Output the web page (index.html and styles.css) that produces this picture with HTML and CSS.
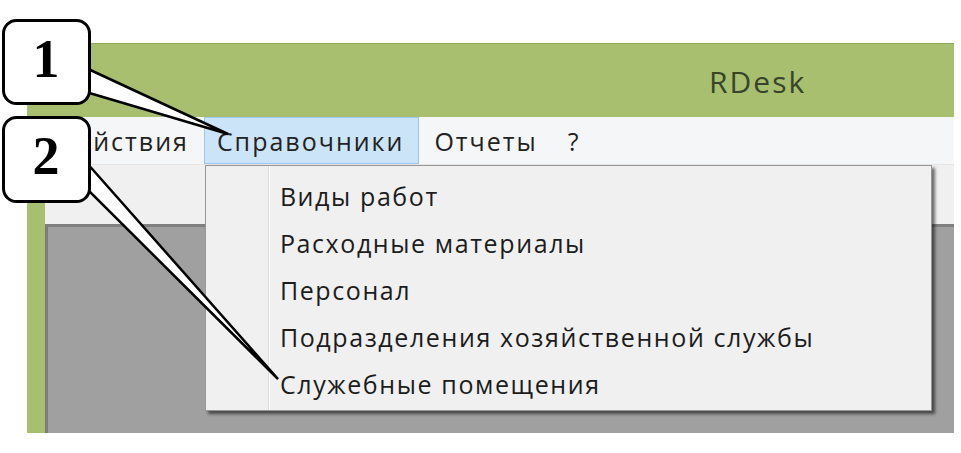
FILE: index.html
```html
<!DOCTYPE html>
<html lang="ru">
<head>
<meta charset="utf-8">
<title>RDesk</title>
<link rel="stylesheet" href="styles.css">
</head>
<body>
<div class="page">
  <div class="window">
    <div class="titlebar"><span class="title">RDesk</span></div>
    <div class="frame">
      <div class="client">
        <nav class="menubar">
          <div class="menu-item first">Действия</div>
          <div class="menu-item active">Справочники
            <div class="dropdown">
              <div class="dd-item">Виды работ</div>
              <div class="dd-item">Расходные материалы</div>
              <div class="dd-item">Персонал</div>
              <div class="dd-item">Подразделения хозяйственной службы</div>
              <div class="dd-item">Служебные помещения</div>
            </div>
          </div>
          <div class="menu-item">Отчеты</div>
          <div class="menu-item">?</div>
        </nav>
        <div class="toolbar"></div>
        <div class="mdi"></div>
      </div>
    </div>
  </div>
</div>
<svg class="callouts" width="961" height="453" viewBox="0 0 961 453">
  <polygon class="wedge" points="86,68 228,134 86,92"/>
  <polygon class="wedge" points="86,162 278,379 86,188"/>
  <rect class="cbox" x="3.5" y="20.5" width="86" height="83" rx="13"/>
  <rect class="cbox" x="3.5" y="117.5" width="86" height="84" rx="13"/>
  <text class="cnum" x="46" y="77">1</text>
  <text class="cnum" x="46" y="174">2</text>
</svg>
</body>
</html>
```

FILE: styles.css
```css
html, body {
  margin: 0;
  padding: 0;
  background: #ffffff;
}

body {
  width: 961px;
  height: 453px;
  overflow: hidden;
  position: relative;
  font-family: "Open Sans", "Noto Sans", sans-serif;
}

.page {
  padding: 43px 7px 0 27px;
}

.window {
  background: #a7bf6f;
  border-top: 1px solid #8fa65b;
  display: flex;
  flex-direction: column;
}

.titlebar {
  height: 73px;
  display: flex;
  align-items: center;
  padding-left: 682px;
}

.title {
  font-size: 30px;
  letter-spacing: 2px;
  color: #37432b;
  margin-top: 2px;
}

.frame {
  display: flex;
  padding-left: 18px;
}

.client {
  flex: 1;
  display: flex;
  flex-direction: column;
  background: #f0f0f0;
}

.menubar {
  height: 47px;
  background: #f5f6f7;
  border-bottom: 1px solid #e6e6e6;
  display: flex;
  align-items: stretch;
  font-size: 25px;
  letter-spacing: 2px;
  color: #222222;
}

.menu-item {
  position: relative;
  display: flex;
  align-items: center;
  padding: 0 14px;
  border: 1px solid transparent;
}

.menu-item.first {
  padding-left: 12px;
  padding-right: 14px;
}

.menu-item.active {
  background: #cce4f7;
  border-color: #99c7ee;
  padding: 0 14px 0 12px;
}

.dropdown {
  position: absolute;
  left: 0;
  top: 47px;
  width: 727px;
  height: 246px;
  padding-top: 6px;
  box-sizing: border-box;
  background: #f0f0f0;
  border: 1px solid #979797;
  box-shadow: 3px 3px 3px rgba(0, 0, 0, 0.55);
  background-image: linear-gradient(to right, transparent 62px, #dcdcdc 62px, #dcdcdc 63px, #ffffff 63px, #ffffff 64px, transparent 64px);
  z-index: 5;
  color: #1c1c1c;
  letter-spacing: 1.6px;
}

.dd-item {
  height: 47px;
  display: flex;
  align-items: center;
  padding-left: 74px;
  white-space: nowrap;
}

.toolbar {
  height: 59px;
  background: #f0f0f0;
}

.mdi {
  height: 206px;
  background: #a0a0a0;
  border-top: 3px solid #808080;
  border-left: 3px solid #7c7c7c;
}

.callouts {
  position: absolute;
  left: 0;
  top: 0;
  pointer-events: none;
  z-index: 10;
}

.wedge {
  fill: #ffffff;
  stroke: #000000;
  stroke-width: 2.5;
  stroke-linejoin: miter;
}

.cbox {
  fill: #ffffff;
  stroke: #000000;
  stroke-width: 3;
}

.cnum {
  font-family: "Liberation Serif", serif;
  font-weight: bold;
  font-size: 54px;
  text-anchor: middle;
  fill: #000000;
}
```
